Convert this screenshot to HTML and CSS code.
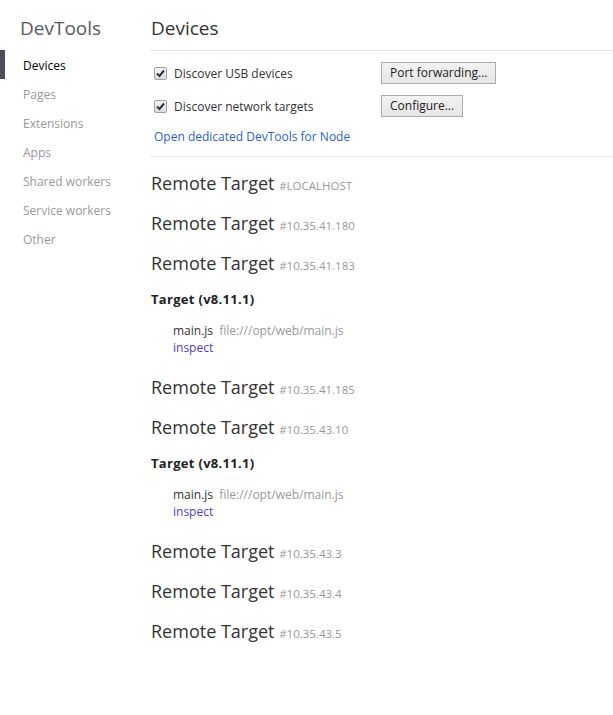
FILE: index.html
```html
<!DOCTYPE html>
<html>
<head>
<meta charset="utf-8">
<link rel="stylesheet" href="styles.css">
</head>
<body>
<div class="app">
  <nav class="sidebar">
    <div class="brand">DevTools</div>
    <ul class="nav">
      <li class="nav-item active">Devices</li>
      <li class="nav-item">Pages</li>
      <li class="nav-item">Extensions</li>
      <li class="nav-item">Apps</li>
      <li class="nav-item">Shared workers</li>
      <li class="nav-item">Service workers</li>
      <li class="nav-item">Other</li>
    </ul>
  </nav>
  <main class="main">
    <h1 class="page-title">Devices</h1>
    <section class="settings">
      <div class="option-grid">
        <label class="check"><span class="box"><svg viewBox="0 0 13 13" width="13" height="13"><path d="M3 6.5 L5.5 9 L10 3.5" fill="none" stroke="#333" stroke-width="2"/></svg></span>Discover USB devices</label>
        <div><button class="btn">Port forwarding...</button></div>
        <label class="check"><span class="box"><svg viewBox="0 0 13 13" width="13" height="13"><path d="M3 6.5 L5.5 9 L10 3.5" fill="none" stroke="#333" stroke-width="2"/></svg></span>Discover network targets</label>
        <div><button class="btn">Configure...</button></div>
      </div>
      <a class="node-link" href="#">Open dedicated DevTools for Node</a>
    </section>
    <section class="targets">
      <h2 class="remote">Remote Target <span class="addr">#LOCALHOST</span></h2>
      <h2 class="remote">Remote Target <span class="addr">#10.35.41.180</span></h2>
      <h2 class="remote">Remote Target <span class="addr">#10.35.41.183</span></h2>
      <div class="browser">
        <h3 class="browser-name">Target (v8.11.1)</h3>
        <div class="item">
          <div><span class="item-name">main.js</span> <span class="item-url">file:///opt/web/main.js</span></div>
          <a class="action" href="#">inspect</a>
        </div>
      </div>
      <h2 class="remote">Remote Target <span class="addr">#10.35.41.185</span></h2>
      <h2 class="remote">Remote Target <span class="addr">#10.35.43.10</span></h2>
      <div class="browser">
        <h3 class="browser-name">Target (v8.11.1)</h3>
        <div class="item">
          <div><span class="item-name">main.js</span> <span class="item-url">file:///opt/web/main.js</span></div>
          <a class="action" href="#">inspect</a>
        </div>
      </div>
      <h2 class="remote">Remote Target <span class="addr">#10.35.43.3</span></h2>
      <h2 class="remote">Remote Target <span class="addr">#10.35.43.4</span></h2>
      <h2 class="remote">Remote Target <span class="addr">#10.35.43.5</span></h2>
    </section>
  </main>
</div>
</body>
</html>
```
FILE: styles.css
```css
* { box-sizing: border-box; }
html, body {
  margin: 0;
  padding: 0;
  background: #fff;
  font-family: "Open Sans", "Noto Sans", sans-serif;
  color: #333;
}
.app {
  display: flex;
  min-height: 715px;
}
.sidebar {
  width: 150px;
  flex: none;
}
.brand {
  height: 50px;
  padding: 15px 0 0 20px;
  font-size: 19px;
  line-height: 26px;
  color: #5a5a5a;
}
.nav {
  list-style: none;
  margin: 0;
  padding: 0;
}
.nav-item {
  height: 29px;
  line-height: 31px;
  font-size: 12px;
  color: #999;
  border-left: 5px solid transparent;
  padding-left: 18px;
}
.nav-item.active {
  color: #000;
  border-left-color: #4b5058;
}
.main {
  flex: 1;
}
.page-title {
  margin: 0;
  height: 51px;
  padding: 15px 0 0 1px;
  font-size: 19px;
  font-weight: normal;
  line-height: 26px;
  color: #333;
  border-bottom: 1px solid #e6e6e6;
}
.settings {
  padding: 11px 0 0 4px;
  height: 106px;
  border-bottom: 1px solid #e6e6e6;
}
.option-grid {
  display: grid;
  grid-template-columns: 227px auto;
  grid-auto-rows: 22px;
  row-gap: 11px;
  align-items: center;
}
.check {
  display: flex;
  align-items: center;
  gap: 7px;
  font-size: 12px;
  line-height: 17px;
  color: #333;
}
.box {
  width: 13px;
  height: 13px;
  border: 1px solid #a0a0a0;
  border-radius: 2px;
  background: linear-gradient(#f3f3f3, #dcdcdc);
  position: relative;
  flex: none;
}
.box svg {
  position: absolute;
  left: -1px;
  top: -1px;
}
.btn {
  display: block;
  height: 22px;
  padding: 0 8px;
  font-family: inherit;
  font-size: 12px;
  line-height: 20px;
  color: #222;
  border: 1px solid #acacac;
  border-radius: 0;
  background: linear-gradient(#f2f2f2, #e6e6e6);
}
.node-link {
  display: block;
  margin-top: 11px;
  line-height: 17px;
  font-size: 12px;
  color: #2d5fd1;
  text-decoration: none;
}
.targets {
  padding: 7px 0 0 1px;
}
.remote {
  margin: 0;
  height: 40px;
  line-height: 38px;
  font-size: 18px;
  font-weight: normal;
  color: #333;
}
.addr {
  font-size: 11.5px;
  color: #999;
}
.browser-name {
  margin: 0;
  height: 30px;
  line-height: 30px;
  font-size: 13px;
  letter-spacing: 0.3px;
  font-weight: bold;
  color: #222;
}
.item {
  padding: 7.5px 0 12.5px 22px;
  font-size: 12px;
  line-height: 17px;
}
.item-name {
  color: #333;
}
.item-url {
  color: #999;
  margin-left: 3px;
}
.action {
  color: #4a3cd9;
  text-decoration: none;
}
```
